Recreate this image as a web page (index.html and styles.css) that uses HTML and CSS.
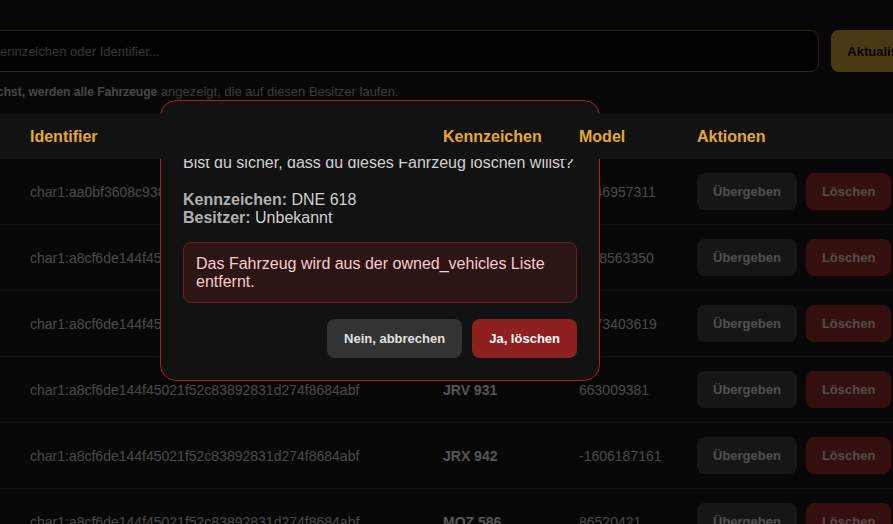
FILE: index.html
```html
<!DOCTYPE html>
<html lang="de">
<head>
    <meta charset="UTF-8">
    <meta name="viewport" content="width=device-width, initial-scale=1.0">
    <title>Fahrzeugverwaltung</title>
    <link rel="stylesheet" href="styles.css">
</head>
<body>

    <div class="app">
        <div class="search">
            <div class="search-bar">
                <input type="text" class="search-input" placeholder="Suche nach Kennzeichen oder Identifier...">
                <button class="btn-refresh">Aktualisieren</button>
            </div>
            <p class="hint"><strong>Info: Wenn du suchst, werden alle Fahrzeuge</strong> angezeigt, die auf diesen Besitzer laufen.</p>
        </div>

        <table class="vehicles">
            <colgroup>
                <col class="col-id">
                <col class="col-plate">
                <col class="col-model">
                <col class="col-actions">
            </colgroup>
            <thead>
                <tr>
                    <th>Identifier</th>
                    <th>Kennzeichen</th>
                    <th>Model</th>
                    <th>Aktionen</th>
                </tr>
            </thead>
            <tbody>
                <tr>
                    <td>char1:aa0bf3608c938d1e2f7b4a6c5d9e0f1a2b3c4d5e</td>
                    <td class="plate">DNE 618</td>
                    <td>1046957311</td>
                    <td><div class="actions"><button class="btn-transfer">Übergeben</button><button class="btn-delete">Löschen</button></div></td>
                </tr>
                <tr>
                    <td>char1:a8cf6de144f45021f52c83892831d274f8684abf</td>
                    <td class="plate">KTR 204</td>
                    <td>-858563350</td>
                    <td><div class="actions"><button class="btn-transfer">Übergeben</button><button class="btn-delete">Löschen</button></div></td>
                </tr>
                <tr>
                    <td>char1:a8cf6de144f45021f52c83892831d274f8684abf</td>
                    <td class="plate">LPA 377</td>
                    <td>1373403619</td>
                    <td><div class="actions"><button class="btn-transfer">Übergeben</button><button class="btn-delete">Löschen</button></div></td>
                </tr>
                <tr>
                    <td>char1:a8cf6de144f45021f52c83892831d274f8684abf</td>
                    <td class="plate">JRV 931</td>
                    <td>663009381</td>
                    <td><div class="actions"><button class="btn-transfer">Übergeben</button><button class="btn-delete">Löschen</button></div></td>
                </tr>
                <tr>
                    <td>char1:a8cf6de144f45021f52c83892831d274f8684abf</td>
                    <td class="plate">JRX 942</td>
                    <td>-1606187161</td>
                    <td><div class="actions"><button class="btn-transfer">Übergeben</button><button class="btn-delete">Löschen</button></div></td>
                </tr>
                <tr>
                    <td>char1:a8cf6de144f45021f52c83892831d274f8684abf</td>
                    <td class="plate">MOZ 586</td>
                    <td>86520421</td>
                    <td><div class="actions"><button class="btn-transfer">Übergeben</button><button class="btn-delete">Löschen</button></div></td>
                </tr>
            </tbody>
        </table>
    </div>

    <!-- Bestätigungsdialog -->
    <div class="overlay">
        <div class="modal">
            <h3 class="modal-title">Fahrzeug löschen</h3>
            <p class="modal-question">Bist du sicher, dass du dieses Fahrzeug löschen willst?</p>
            <div class="modal-details">
                <div><strong>Kennzeichen:</strong> DNE 618</div>
                <div><strong>Besitzer:</strong> Unbekannt</div>
            </div>
            <div class="modal-warning">Das Fahrzeug wird aus der owned_vehicles Liste entfernt.</div>
            <div class="modal-buttons">
                <button class="btn-cancel">Nein, abbrechen</button>
                <button class="btn-confirm">Ja, löschen</button>
            </div>
        </div>
    </div>

</body>
</html>
```

FILE: styles.css
```css
html, body {
    overflow: hidden;
}
body {
    margin: 0;
    padding-top: 30px;
    background-color: #161616;
    color: #cccccc;
    font-family: "Liberation Sans", Arial, sans-serif;
}
button {
    font-family: inherit;
    cursor: pointer;
}

/* Suche */
.search {
    margin-left: -96px; /* Seite ist nach rechts gescrollt */
    width: 1041px;
}
.search-bar {
    display: flex;
    gap: 12px;
}
.search-input {
    flex: 1;
    height: 42px;
    box-sizing: border-box;
    padding: 0 14px;
    font-size: 13px;
    font-family: inherit;
    color: #dddddd;
    background-color: #070707;
    border: 1px solid #7a672c;
    border-radius: 8px;
    outline: none;
}
.search-input::placeholder {
    color: #9a9a9a;
}
.btn-refresh {
    height: 42px;
    padding: 0 16px;
    font-size: 13px;
    font-weight: bold;
    color: #111111;
    background-color: #d4a63a;
    border: none;
    border-radius: 8px;
}
.hint {
    margin: 12px 0 15px -4px;
    font-size: 13px;
    color: #a8a8a8;
}
.hint strong {
    font-size: 12px;
    color: #c8c8c8;
}

/* Tabelle */
.vehicles {
    width: 965px;
    table-layout: fixed;
    border-collapse: collapse;
    font-size: 14px;
}
.col-id { width: 427px; }
.col-plate { width: 136px; }
.col-model { width: 118px; }
.col-actions { width: 284px; }
.vehicles th {
    position: sticky; /* liegt ueber dem Overlay */
    top: 0;
    z-index: 1001;
    padding: 14px 16px 13px;
    line-height: 18px;
    font-size: 16px;
    text-align: left;
    color: #e6aa2a;
    background-color: #121212;
}
.vehicles td {
    padding: 14px 16px;
    white-space: nowrap;
    overflow: hidden;
    color: #cfcfcf;
    border-bottom: 1px solid #2e2e2e;
}
.vehicles th:first-child,
.vehicles td:first-child {
    padding-left: 30px;
}
.vehicles td.plate {
    font-weight: bold;
    color: #f0f0f0;
}
.actions {
    display: flex;
    gap: 9px;
}
.actions button {
    padding: 10px 16px;
    line-height: 17px;
    font-size: 13px;
    font-weight: bold;
    border: none;
    border-radius: 8px;
}
.btn-transfer {
    color: #e0e0e0;
    background-color: #404040;
}
.btn-delete {
    color: #f0d4d4;
    background-color: #972b2b;
}

/* Dialog */
.overlay {
    position: fixed;
    inset: 0;
    z-index: 1000;
    display: flex;
    align-items: flex-start;
    padding: 100px 0 0 160px;
    background-color: rgba(0, 0, 0, 0.65);
}
.modal {
    width: 440px;
    box-sizing: border-box;
    padding: 22px;
    font-size: 16px;
    color: #d0d0d0;
    background-color: #121212;
    border: 1px solid #a32222;
    border-radius: 16px;
}
.modal-title {
    margin: 0 0 10px;
    font-size: 18px;
    color: #e05050;
}
.modal-question {
    margin: 0 0 19px;
}
.modal-details strong {
    color: #b0b0b0;
}
.modal-warning {
    margin: 15px 0 16px;
    padding: 12px 12px 11px;
    color: #f4cccc;
    background-color: #2d1515;
    border: 1px solid #6b1f1f;
    border-radius: 8px;
}
.modal-buttons {
    display: flex;
    justify-content: flex-end;
    gap: 10px;
}
.modal-buttons button {
    padding: 11px 17px;
    line-height: 17px;
    font-size: 13px;
    font-weight: bold;
    border: none;
    border-radius: 8px;
}
.btn-cancel {
    color: #e0e0e0;
    background-color: #333333;
}
.btn-confirm {
    color: #ffffff;
    background-color: #8e2020;
}
```
